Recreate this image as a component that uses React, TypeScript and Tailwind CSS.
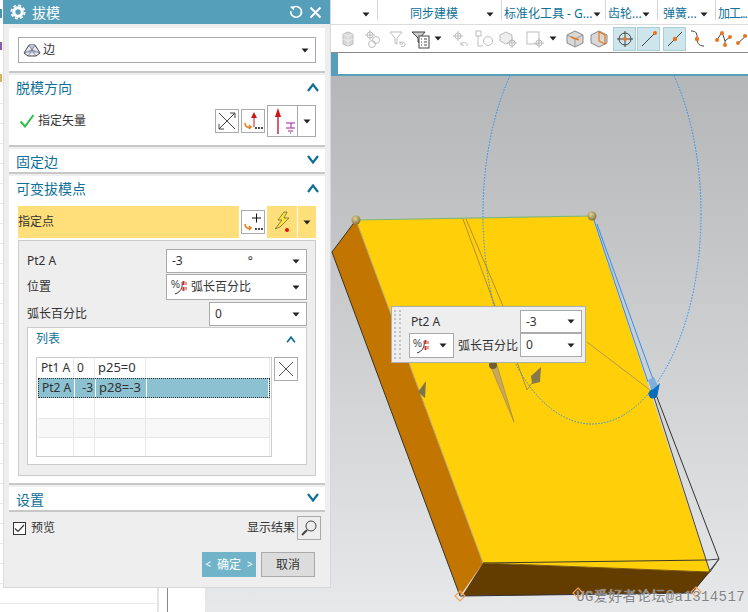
import type { ReactNode } from "react";

const rows = [
  ["Pt1 A", "0", "p25=0", ""],
  ["Pt2 A", "-3", "p28=-3", ""],
  ["", "", "", ""],
  ["", "", "", ""],
  ["", "", "", ""],
];

function Caret({ className = "" }: { className?: string }) {
  return (
    <svg width="8" height="5" viewBox="0 0 8 5" className={`shrink-0 ${className}`}>
      <path d="M0.5 0.5h7L4 4.5z" fill="#222" />
    </svg>
  );
}

function Chevron({ open, small }: { open?: boolean; small?: boolean }) {
  return (
    <svg width={small ? 10 : 12} height={small ? 7 : 9} viewBox="0 0 12 9" className="shrink-0">
      <path
        d={open ? "M1 8l5-6.5L11 8" : "M1 1l5 6.5L11 1"}
        fill="none"
        stroke="#0f6f94"
        strokeWidth="2.2"
      />
    </svg>
  );
}

function PercentIcon() {
  return (
    <svg width="18" height="18" viewBox="0 0 18 18" className="shrink-0">
      <text x="0" y="10" fontSize="10" fill="#333" fontFamily="Liberation Sans">
        %
      </text>
      <path d="M11 4c1 5-1 10-7 12" fill="none" stroke="#333" strokeWidth="1" />
      <path d="M12.5 3v4M12.5 9v4" stroke="#d0302a" strokeWidth="2" />
      <path d="M15 4v3M15 9v3" stroke="#d0302a" strokeWidth="1" />
    </svg>
  );
}

function XIcon({ size = 16 }: { size?: number }) {
  return (
    <svg width={size} height={size} viewBox="0 0 16 16">
      <path d="M1 1l14 14M15 1L1 15" stroke="#555" strokeWidth="1" />
    </svg>
  );
}

function SectionHead({ title, open, collapsed }: { title: string; open?: boolean; collapsed?: boolean }) {
  return (
    <div
      className={`flex items-center justify-between pl-[7px] pr-[6px] text-[14px] text-[#0f7199] ${
        collapsed ? "h-[23px]" : "h-[26px] pb-[2px]"
      }`}
    >
      <span className={collapsed ? "translate-y-px" : ""}>{title}</span>
      <span className={collapsed ? "-translate-y-px" : ""}>
        <Chevron open={open} />
      </span>
    </div>
  );
}

function IconBtn({ children, className = "" }: { children: ReactNode; className?: string }) {
  return (
    <div className={`flex h-[24px] w-[24px] shrink-0 items-center justify-center border border-[#aaa] bg-white ${className}`}>
      {children}
    </div>
  );
}

function Field({ children, className = "" }: { children: ReactNode; className?: string }) {
  return (
    <div className={`flex items-center justify-between border border-[#aaa] bg-white pl-[5px] pr-[6px] text-[12px] ${className}`}>
      {children}
    </div>
  );
}

function PointerIcon({ plus }: { plus?: boolean }) {
  return (
    <svg width="20" height="20" viewBox="0 0 20 20">
      <path d="M2 12c0 4 3 5 6 4M6 14l2 2-2 2" fill="none" stroke="#e8801c" strokeWidth="1.6" />
      {plus ? (
        <path d="M9 6h9M13.5 1.5v9" stroke="#111" strokeWidth="1" />
      ) : (
        <>
          <path d="M11 7v9" stroke="#c81818" strokeWidth="1" />
          <path d="M11 1l3 6H8z" fill="#c81818" />
        </>
      )}
      <path d="M12 17h2M15 17h2M18 17h2" stroke="#111" strokeWidth="1.6" />
    </svg>
  );
}

function Slot({ children, className }: { children: ReactNode; className: string }) {
  return <div className={`flex h-[24px] shrink-0 items-center justify-center ${className}`}>{children}</div>;
}

const gray = "#bdbdbd";
const dark = "#444";
const orange = "#e8761c";

function Target({ c, x = 9, y = 9, r = 4 }: { c: string; x?: number; y?: number; r?: number }) {
  return (
    <g fill="none" stroke={c} strokeWidth="1">
      <circle cx={x} cy={y} r={r} />
      <path d={`M${x - r - 2} ${y}h${2 * r + 4}M${x} ${y - r - 2}v${2 * r + 4}`} />
    </g>
  );
}

function Toolbar() {
  const i = { width: 20, height: 20, viewBox: "0 0 20 20" };
  return (
    <div className="flex h-[28px] items-center border-b border-[#8a8a8a] bg-white pl-[131px]">
      <Slot className="w-[24px]">
        <svg {...i}>
          <path d="M5 5l5-2 5 2v10l-5 2-5-2z" fill="#d8d8d8" stroke={gray} />
          <path d="M5 5l5 2 5-2M10 7v10M5 10l5 2 5-2" fill="none" stroke="#efefef" />
        </svg>
      </Slot>
      <Slot className="w-[25px]">
        <svg {...i}>
          <Target c={gray} x={7} y={6} r={3} />
          <circle cx="13" cy="11" r="3.5" fill="none" stroke={gray} />
          <circle cx="9" cy="15" r="3.5" fill="none" stroke={gray} />
        </svg>
      </Slot>
      <Slot className="w-[25px]">
        <svg {...i}>
          <path d="M2 3h12l-5 6v6l-2-1V9z" fill="none" stroke={gray} />
          <path d="M12 14c3-2 6 0 5 2s-3 2-4 1M12 12v3h3" fill="none" stroke={gray} />
        </svg>
      </Slot>
      <Slot className="w-[22px]">
        <svg {...i}>
          <path d="M1 3h13l-5 6v5l-2-1V9z" fill="#ccc" stroke={dark} />
          <rect x="8" y="7" width="10" height="12" fill="#fff" stroke={dark} />
          <path d="M10 10h1M13 10h3M10 13h1M13 13h3M10 16h1M13 16h3" stroke={dark} />
        </svg>
      </Slot>
      <Slot className="w-[11px]">
        <Caret />
      </Slot>
      <Slot className="ml-[5px] w-[24px]">
        <svg {...i}>
          <Target c={gray} x={8} y={7} r={3} />
          <path d="M11 15c3-3 7-1 6 2M11 13v3h3" fill="none" stroke={gray} />
        </svg>
      </Slot>
      <Slot className="w-[24px]">
        <svg {...i}>
          <rect x="2" y="2" width="5" height="5" fill="none" stroke={gray} />
          <path d="M4 7v10h5" fill="none" stroke={gray} />
          <circle cx="14" cy="12" r="4.5" fill="none" stroke={gray} />
        </svg>
      </Slot>
      <Slot className="w-[24px]">
        <svg {...i}>
          <path d="M2 6l6-3 6 3v6l-6 3-6-3z" fill="#eee" stroke={gray} />
          <Target c={gray} x={14} y={14} r={3} />
        </svg>
      </Slot>
      <Slot className="ml-[2px] w-[26px]">
        <svg {...i}>
          <rect x="2" y="3" width="12" height="12" fill="none" stroke={gray} />
          <Target c={gray} x={14} y={14} r={3} />
        </svg>
      </Slot>
      <Slot className="w-[10px]">
        <Caret />
      </Slot>
      <Slot className="ml-[5px] w-[24px]">
        <svg {...i}>
          <path d="M2 6l8-4 8 4v8l-8 4-8-4z" fill="#d8d8d8" stroke="#888" />
          <path d="M2 6l8 4 8-4M10 10v8" fill="none" stroke="#999" />
          <path d="M6 8l8 3" stroke={orange} strokeWidth="1.5" />
        </svg>
      </Slot>
      <Slot className="w-[24px]">
        <svg {...i}>
          <path d="M2 6l8-4 8 4v8l-8 4-8-4z" fill="#d8d8d8" stroke="#888" />
          <path d="M10 3l6 3v9l-6-3z" fill="none" stroke={orange} strokeWidth="1.2" />
        </svg>
      </Slot>
      <Slot className="ml-[2px] w-[23px] border border-[#a9cfdc] bg-[#cfe5ec]">
        <svg {...i}>
          <Target c={dark} x={10} y={10} r={6} />
          <circle cx="10" cy="10" r="2" fill={orange} />
        </svg>
      </Slot>
      <Slot className="ml-px w-[23px] border border-[#a9cfdc] bg-[#cfe5ec]">
        <svg {...i}>
          <path d="M3 17L16 4" stroke={dark} strokeWidth="1" />
          <circle cx="16" cy="4" r="2" fill={orange} />
        </svg>
      </Slot>
      <Slot className="ml-[3px] w-[23px] border border-[#a9cfdc] bg-[#cfe5ec]">
        <svg {...i}>
          <path d="M3 17L17 3" stroke={dark} strokeWidth="1" />
          <circle cx="10" cy="10" r="2.2" fill={orange} />
        </svg>
      </Slot>
      <Slot className="w-[24px]">
        <svg {...i}>
          <path d="M3 2c6 0 6 3 6 7s1 8 7 8" fill="none" stroke={dark} />
          <circle cx="9" cy="10" r="2.2" fill={orange} />
        </svg>
      </Slot>
      <Slot className="ml-px w-[24px]">
        <svg {...i}>
          <path d="M4 11L9 3l3 9 6-5M12 12v5" fill="none" stroke={dark} />
          <circle cx="4" cy="11" r="2" fill={orange} />
          <circle cx="9" cy="4" r="2" fill={orange} />
          <circle cx="12" cy="16" r="2" fill={orange} />
          <circle cx="17" cy="8" r="2" fill={orange} />
        </svg>
      </Slot>
      <Slot className="w-[12px] overflow-hidden">
        <svg width="12" height="20" viewBox="0 0 12 20">
          <path d="M2 15L12 6" stroke={dark} />
          <circle cx="3" cy="14" r="2" fill={orange} />
          <circle cx="10" cy="7" r="2" fill={orange} />
        </svg>
      </Slot>
    </div>
  );
}

function Ribbon() {
  const cell =
    "flex h-[20px] shrink-0 items-center justify-between whitespace-nowrap border-r border-[#d6d6d6] pt-[8px] text-[12px] leading-[12px] text-[#0f7199]";
  return (
    <div className="flex h-[25px] overflow-hidden border-b border-[#dcdcdc] bg-white">
      <div className={`${cell} w-[173px] !justify-end pr-[7px]`}>
        <Caret />
      </div>
      <div className={`${cell} w-[124px] pl-[32px] pr-[7px]`}>
        <span>同步建模</span>
        <Caret />
      </div>
      <div className={`${cell} w-[104px] pl-[2px] pr-[7px]`}>
        <span>标准化工具 - G...</span>
        <Caret />
      </div>
      <div className={`${cell} w-[52px] pl-[2px] pr-[7px]`}>
        <span>齿轮...</span>
        <Caret />
      </div>
      <div className={`${cell} w-[58px] pl-[5px] pr-[7px]`}>
        <span>弹簧...</span>
        <Caret />
      </div>
      <div className="flex h-[20px] items-center whitespace-nowrap pl-[2px] pt-[8px] text-[12px] leading-[12px] tracking-[-1px] text-[#0f7199]">
        <span>加工...</span>
      </div>
    </div>
  );
}

function Navigator() {
  return (
    <div className="flex h-full w-[205px] shrink-0 bg-white">
      <div className="w-[159px] overflow-hidden border-r-2 border-[#e4e4e4]">
        <div className="flex h-[84px] flex-col gap-[24px] pt-[9px]">
          <div className="h-[9px] w-[2px] bg-[#4d8fb0]" />
          <div className="h-[8px] w-[2px] bg-[#8a5aa8]" />
          <div className="h-[8px] w-[2px] bg-[#d8b060]" />
        </div>
        {Array.from({ length: 26 }).map((_, n) => (
          <div key={n} className="h-[20px] border-b border-[#e8e8e8]" />
        ))}
      </div>
      <div className="ml-[8px] w-px bg-[#8a8a8a]" />
    </div>
  );
}

function Part() {
  return (
    <svg viewBox="205 76 543 536" className="block h-full w-full">
      <defs>
        <radialGradient id="ball" cx="40%" cy="35%" r="70%">
          <stop offset="0%" stopColor="#e6d59a" />
          <stop offset="100%" stopColor="#7d6b35" />
        </radialGradient>
      </defs>
      <path d="M356 220L332 252 460 596 483 563z" fill="#c27600" />
      <path d="M483 563L710 572 692 593 462 596z" fill="#633c00" />
      <path d="M356 220L592 216 710 572 483 563z" fill="#ffcf0a" />
      <path d="M356 220L332 252 460 596 692 593 719 559 655 392" fill="none" stroke="#333" strokeWidth="1" />
      <path d="M653 394L710 572M719 559L708 560M719 559L710 572" fill="none" stroke="#444" strokeWidth="1" />
      <path d="M483 563L708 560" fill="none" stroke="#3c3a2a" strokeWidth="1" />
      <path d="M483 563L710 572" fill="none" stroke="#7a5a10" strokeWidth="1" />
      <path d="M356 220L483 563" stroke="#b9a878" strokeWidth="1" />
      <path d="M356 220L592 216" stroke="#7fb77a" strokeWidth="1.2" />
      <path d="M463 219L495 306M466 219L503 306" stroke="#b58f2a" strokeWidth="1" />
      <path d="M587 342L650 390" stroke="#b59a50" strokeWidth="1" />
      <path d="M517 362L527 390 537 376" fill="none" stroke="#b58f2a" strokeWidth="1" />
      <ellipse cx="592" cy="214" rx="109" ry="210" fill="none" stroke="#1e90ff" strokeWidth="1" strokeDasharray="1.5 1.5" />
      <path d="M594 220L648 382M597 224L654 382" stroke="#2f90f5" strokeWidth="1" />
      <path d="M648 380l6-3 5 12-7 3z" fill="#7fb0dc" />
      <path d="M660 383l-3 14-9-3z" fill="#0b74c4" />
      <circle cx="653" cy="394" r="4.5" fill="#0b6cb8" />
      <path d="M490 365L514 422 497 365z" fill="#c8a860" stroke="#8c7a45" strokeWidth="0.5" />
      <circle cx="493" cy="365" r="4" fill="#6e5f30" />
      <path d="M426 381l-8 11 7 6z" fill="#7d7448" />
      <path d="M541 367l-10 9 1 8 8-2z" fill="#86794a" />
      <circle cx="356" cy="220" r="4.5" fill="url(#ball)" />
      <circle cx="592" cy="216" r="4.5" fill="url(#ball)" />
      <g fill="none" stroke="#f0a25a" strokeWidth="1.2">
        <path d="M460 591l5 5-5 5-5-5z" />
        <path d="M578 588l5 5-5 5-5-5z" />
        <path d="M696 587l5 5-5 5-5-5z" />
      </g>
    </svg>
  );
}

function FloatPanel() {
  return (
    <div className="absolute left-[186px] top-[230px] flex h-[57px] w-[195px] border border-[#aeaeae] bg-[#eeeeee] text-[12px] text-[#333]">
      <div className="ml-[2px] grid h-[50px] w-[8px] grid-cols-2 gap-[2px] self-center">
        {Array.from({ length: 24 }).map((_, n) => (
          <div key={n} className="h-[2px] w-[2px] bg-[#c4c4c4]" />
        ))}
      </div>
      <div className="flex flex-col pl-[7px] pt-[3px]">
        <div className="flex h-[23px]">
          <span className="flex w-[111px] items-center pl-[2px]">Pt2 A</span>
          <Field className="h-[23px] w-[62px]">
            <span>-3</span>
            <Caret />
          </Field>
        </div>
        <div className="flex h-[25px]">
          <Field className="h-[25px] w-[45px] !pl-[3px]">
            <PercentIcon />
            <Caret />
          </Field>
          <span className="ml-[4px] mr-[2px] flex w-[60px] items-center whitespace-nowrap">弧长百分比</span>
          <Field className="h-[24px] w-[62px]">
            <span>0</span>
            <Caret />
          </Field>
        </div>
      </div>
    </div>
  );
}

function Dialog() {
  return (
    <div className="absolute left-[3px] top-0 h-[588px] w-[328px] border-b border-r border-[#d8d8d8] bg-[#eeeeee] text-[12px] text-[#333] shadow-[inset_1px_0_0_#dddddd]">
      <div className="flex h-[24px] items-center bg-[#569fba] pl-[7px] pr-[8px] text-[14px] text-white">
        <svg width="16" height="16" viewBox="0 0 16 16">
          <circle cx="8" cy="8" r="4.2" fill="none" stroke="#fff" strokeWidth="3" />
          <circle cx="8" cy="8" r="6.6" fill="none" stroke="#fff" strokeWidth="1.8" strokeDasharray="3 2.2" />
        </svg>
        <span className="ml-[6px] flex-1">拔模</span>
        <svg width="14" height="14" viewBox="0 0 14 14" className="mr-[6px]">
          <path d="M4 2.5A5.4 5.4 0 1 1 1.8 6" fill="none" stroke="#fff" strokeWidth="1.6" />
          <path d="M0.8 1.5h4.2v4z" fill="#fff" />
        </svg>
        <svg width="13" height="13" viewBox="0 0 13 13">
          <path d="M1.5 1.5l10 10M11.5 1.5l-10 10" stroke="#fff" strokeWidth="2" />
        </svg>
      </div>

      <div className="flex flex-col gap-[2px] pl-[6px] pr-[5px] pt-[4px]">
        {/* type */}
        <div className="h-[45px] border-b-2 border-[#c8c8c8] bg-white px-[9px] pt-[9px]">
          <div className="flex h-[26px] items-center justify-between border border-[#aaa] pl-[4px] pr-[6px] text-[12px]">
            <span className="flex items-center gap-[2px]">
              <svg width="18" height="16" viewBox="0 0 18 16">
                <path d="M1 11L6 3h6l5 8-4 3H5z" fill="#e8e8ee" stroke="#444" />
                <path d="M6 3l3 5 3-5M9 8l-4 6M9 8l4 6M1 11l8-3 8 3" fill="#b9c9ec" stroke="#667" strokeWidth="0.7" />
              </svg>
              边
            </span>
            <Caret />
          </div>
        </div>

        {/* draw direction */}
        <div className="h-[72px] border-b-2 border-[#c8c8c8] bg-white">
          <SectionHead title="脱模方向" open />
          <div className="mt-[4px] flex h-[32px] items-center pl-[10px] pr-[9px]">
            <svg width="16" height="14" viewBox="0 0 16 14">
              <path d="M1.5 7.5l4.5 5L14.5 1" fill="none" stroke="#2fbf4a" strokeWidth="2" />
            </svg>
            <span className="ml-[3px] flex-1">指定矢量</span>
            <IconBtn>
              <svg width="20" height="20" viewBox="0 0 20 20">
                <path d="M2 18L18 2M2 2l16 16M13 2h5v5M2 13v5h5" fill="none" stroke="#444" strokeWidth="1" />
              </svg>
            </IconBtn>
            <IconBtn className="ml-[2px]">
              <PointerIcon />
            </IconBtn>
            <div className="ml-[2px] flex h-[32px] w-[49px] border border-[#aaa]">
              <div className="flex w-[30px] items-center justify-center border-r border-[#aaa]">
                <svg width="26" height="28" viewBox="0 0 26 28">
                  <path d="M8 7v20" stroke="#c81838" strokeWidth="1.4" />
                  <path d="M8 1l3 9H5z" fill="#c81818" />
                  <path d="M16 16h9M21 16v5M16 21h9M18 24h5M20 26h1" fill="none" stroke="#a020a0" strokeWidth="1" />
                </svg>
              </div>
              <div className="flex flex-1 items-center justify-center">
                <Caret />
              </div>
            </div>
          </div>
        </div>

        {/* fixed edge */}
        <div className="h-[25px] border-b-2 border-[#c8c8c8] bg-white">
          <SectionHead title="固定边" collapsed />
        </div>

        {/* variable draft points */}
        <div className="h-[309px] border-b-2 border-[#c8c8c8] bg-white">
          <SectionHead title="可变拔模点" open />
          <div className="mx-[9px] mt-[4px] flex h-[32px] items-center">
            <div className="flex h-full flex-1 items-center bg-[#ffdf7a]">指定点</div>
            <IconBtn className="ml-[2px]">
              <PointerIcon plus />
            </IconBtn>
            <div className="ml-[2px] flex h-full w-[49px] bg-[#ffdf7a]">
              <div className="flex w-[31px] items-center justify-center border-r border-white">
                <svg width="18" height="24" viewBox="0 0 18 24">
                  <path d="M11 2L5 10h4L2 19l5-2 9-9h-5l3-6z" fill="#ffe23c" stroke="#6e6a3a" strokeWidth="0.8" />
                  <circle cx="14" cy="20" r="2" fill="#e01010" />
                </svg>
              </div>
              <div className="flex flex-1 items-center justify-center">
                <Caret />
              </div>
            </div>
          </div>

          <div className="mx-[9px] mt-[2px] h-[236px] border border-[#cccccc] bg-[#eeeeee] px-[8px] pt-[8px]">
            <div className="flex h-[24px] items-center justify-between">
              <span className="text-[12px]">Pt2 A</span>
              <Field className="h-[24px] w-[141px]">
                <span>-3</span>
                <span className="ml-[65px] flex-1">°</span>
                <Caret />
              </Field>
            </div>
            <div className="mt-px flex h-[26px] items-center justify-between">
              <span>位置</span>
              <Field className="h-[26px] w-[141px] !pl-[4px]">
                <span className="flex items-center gap-[2px]">
                  <PercentIcon />
                  弧长百分比
                </span>
                <Caret />
              </Field>
            </div>
            <div className="mt-[2px] flex h-[24px] items-center justify-between">
              <span>弧长百分比</span>
              <Field className="h-[24px] w-[98px]">
                <span>0</span>
                <Caret />
              </Field>
            </div>

            <div className="mt-px h-[138px] border border-[#cccccc] bg-white px-[8px]">
              <div className="flex h-[22px] items-center justify-between pr-[2px] text-[#0f7199]">
                <span>列表</span>
                <Chevron open small />
              </div>
              <div className="mt-[7px] flex items-start">
                <div className="h-[100px] w-[236px] border border-[#cccccc] bg-white px-px">
                  {rows.map((row, n) => {
                    const selected = n === 1;
                    const heights = ["h-[20px]", "h-[20px]", "h-[20px]", "h-[20px]", "h-[18px]"];
                    return (
                      <div
                        key={n}
                        className={`grid grid-cols-[36px_21px_51px_1fr] ${heights[n]} border-[#e8e8e8] ${
                          selected
                            ? "border border-dotted !border-[#333] bg-[#8bc1d1]"
                            : n === 3
                              ? "border-y bg-[#f8f8f8]"
                              : ""
                        }`}
                      >
                        {row.map((c, m) => (
                          <div
                            key={m}
                            className={`flex items-center overflow-hidden whitespace-nowrap pl-[3px] ${
                              m === 2 ? "text-[13px]" : ""
                            } ${m === 1 && selected ? "justify-end pr-[2px]" : ""} ${
                              selected ? "border-r border-white" : "border-r border-[#e8e8e8]"
                            }`}
                          >
                            {c}
                          </div>
                        ))}
                      </div>
                    );
                  })}
                </div>
                <IconBtn className="ml-[2px]">
                  <XIcon />
                </IconBtn>
              </div>
            </div>
          </div>
        </div>

        {/* settings */}
        <div className="h-[25px] border-b-2 border-[#c8c8c8] bg-white">
          <SectionHead title="设置" collapsed />
        </div>

        {/* footer */}
        <div className="mt-[2px] flex h-[24px] items-center pl-[4px] pr-[4px]">
          <div className="flex h-[13px] w-[13px] items-center justify-center border border-[#333] bg-white">
            <svg width="11" height="9" viewBox="0 0 11 9">
              <path d="M1 4.5l3 3L10 1" fill="none" stroke="#333" strokeWidth="1.2" />
            </svg>
          </div>
          <span className="ml-[5px] flex-1">预览</span>
          <span className="mr-[2px]">显示结果</span>
          <div className="flex h-[24px] w-[24px] items-center justify-center border border-[#aaa]">
            <svg width="18" height="18" viewBox="0 0 18 18">
              <circle cx="11" cy="7" r="5" fill="none" stroke="#444" strokeWidth="1" />
              <path d="M7 11l-5 5" stroke="#444" strokeWidth="2" />
            </svg>
          </div>
        </div>
        <div className="mt-[10px] flex justify-end gap-[5px] pr-[10px]">
          <div className="flex h-[25px] w-[54px] items-center justify-center gap-[6px] bg-[#71b3c9] text-white">
            <span className="text-[10px]">&lt;</span>
            <span>确定</span>
            <span className="text-[10px]">&gt;</span>
          </div>
          <div className="flex h-[25px] w-[54px] items-center justify-center border border-[#aaa] bg-[#dcdcdc]">取消</div>
        </div>
      </div>
    </div>
  );
}

export default function App() {
  return (
    <div className="relative flex h-[612px] w-[748px] overflow-hidden bg-white font-['Noto_Sans','Noto_Sans_CJK_SC',sans-serif]">
      <Navigator />
      <div className="flex min-w-0 flex-1 flex-col">
        <Ribbon />
        <Toolbar />
        <div className="flex h-[23px] border-b-2 border-[#569fba] bg-white">
          <div className="ml-[126px] w-[7px] bg-[#569fba]" />
        </div>
        <div className="relative min-h-0 flex-1 bg-linear-to-b from-[#b5b6b8] to-[#e7e8ea]">
          <Part />
          <FloatPanel />
          <span className="absolute bottom-[4px] right-[3px] whitespace-nowrap font-['Liberation_Mono','Noto_Sans_CJK_SC',monospace] text-[14px] tracking-[0.4px] text-[#808285] [text-shadow:0_0_1px_#fff]">
            UG爱好者论坛@a1314517
          </span>
        </div>
      </div>
      <Dialog />
    </div>
  );
}
